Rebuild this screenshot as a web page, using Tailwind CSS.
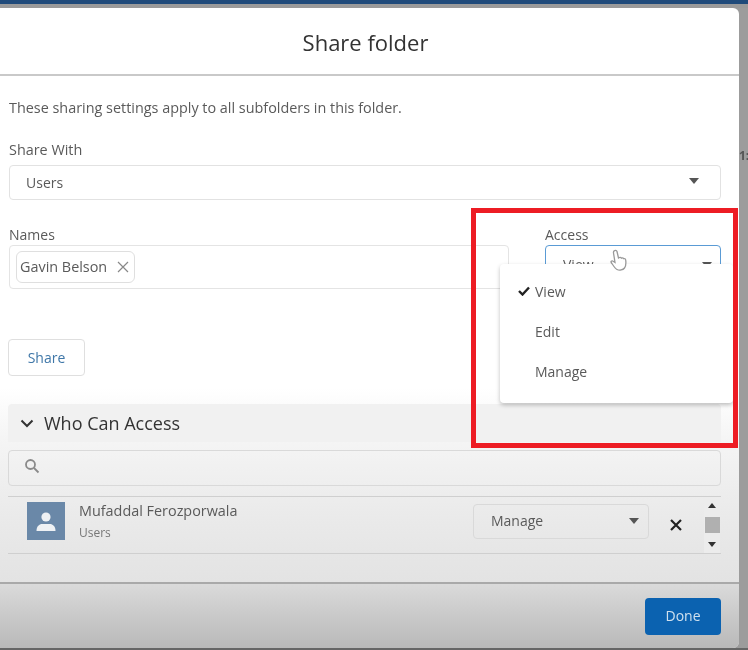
<!DOCTYPE html>
<html lang="en">
<head>
  <meta charset="UTF-8">
  <title>Share folder</title>
  <script src="https://cdn.jsdelivr.net/npm/@tailwindcss/browser@4"></script>
</head>
<body class="relative w-[748px] h-[650px] overflow-hidden bg-[#9c9c9c] font-['Open_Sans',sans-serif] text-[#5a5a5a]">
  <!-- page behind the modal -->
  <div class="h-1 bg-[#1f4a7a]"></div>
  <div class="h-1 bg-[#9a9a9a]"></div>
  <span class="absolute left-[739px] top-[146px] text-xs font-bold leading-5 text-[#555] blur-[0.4px]">1:</span>

  <!-- modal -->
  <div class="relative w-[739px] h-[640px] flex flex-col rounded-tr-md rounded-br-md blur-[0.4px] bg-[linear-gradient(to_bottom,#fff_0,#fff_380px,#f5f5f5_430px,#ebebeb_500px,#e3e3e3_574px)]">
    <div class="h-[68px] shrink-0 flex items-center justify-center pt-[2px] pr-2 border-b-2 border-[#c9c9c9] text-[22px] text-[#333]">Share folder</div>

    <div class="flex-1 px-[9px] flex flex-col">
      <p class="mt-[22px] text-[14.4px] leading-5">These sharing settings apply to all subfolders in this folder.</p>

      <label class="mt-[22px] text-[14.4px] leading-5">Share With</label>
      <div class="mt-[5px] w-[712px] h-[35px] flex items-center justify-between pl-[16px] pr-[21px] border border-[#e2e2e2] rounded text-sm">
        <span>Users</span>
        <span class="-mt-[3px] w-0 h-0 border-x-[5px] border-x-transparent border-t-[6px] border-t-[#555]"></span>
      </div>

      <div class="mt-[25px] flex">
        <div class="w-[500px]">
          <label class="block text-sm leading-5">Names</label>
          <div class="h-[44px] flex items-center pl-[6px] border border-[#e4e4e4] rounded">
            <div class="h-8 w-[119px] flex items-center justify-between pl-[3px] pr-1 border border-[#dfdfdf] rounded-md text-[14.4px]">
              <span>Gavin Belson</span>
              <svg width="14" height="14" viewBox="0 0 14 14" class="stroke-[#888]" fill="none" stroke-width="1.2"><path d="M2 2l10 10M12 2L2 12"/></svg>
            </div>
          </div>
        </div>
        <div class="ml-[36px] w-[176px]">
          <label class="block text-sm leading-5">Access</label>
          <div class="h-[40px] flex items-center justify-between pl-[17px] pr-2 border border-[#5a9bd5] rounded text-sm">
            <span>View</span>
            <span class="w-0 h-0 border-x-[5px] border-x-transparent border-t-[6px] border-t-[#555]"></span>
          </div>
        </div>
      </div>

      <button class="mt-[50px] w-[77px] h-[37px] -ml-px border border-[#dfdfdf] rounded text-sm text-[#3f77a8]">Share</button>

      <div class="mt-[28px] w-[713px] -ml-px h-[38px] shrink-0 flex items-center pl-3 gap-[10px] bg-[#f1f1f1] rounded-t text-[#333] text-[18px]">
        <svg width="14" height="14" viewBox="0 0 14 14" fill="none" stroke="#333" stroke-width="2"><path d="M1.5 4.500L7 10l5.500-5.500"/></svg>
        <span>Who Can Access</span>
      </div>

      <div class="mt-2 w-[713px] -ml-px h-[36px] shrink-0 flex items-center pl-[15px] pb-1 border border-[#d9d9d9] rounded">
        <svg width="16" height="16" viewBox="0 0 16 16" fill="none" stroke="#8a8a8a" stroke-width="1.8"><circle cx="6.5" cy="6.5" r="4.5"/><path d="M10 10l4.500 4.500"/></svg>
      </div>

      <div class="mt-[10px] w-[713px] -ml-px h-[58px] shrink-0 flex items-center pl-[19px] pb-[6px] border-y border-[#cfcfcf]">
        <div class="-mt-[2px] w-[38px] h-[38px] flex items-center justify-center bg-[#6a88a8]">
          <svg width="22" height="22" viewBox="0 0 22 22" fill="#eef1f4"><circle cx="11" cy="7" r="4.6"/><path d="M1.500 21c0-5 3-7 5.500-7h8c2.500 0 5.500 2 5.500 7z"/></svg>
        </div>
        <div class="ml-[14px] w-[394px]">
          <div class="text-[14.4px] leading-5 -mt-[2px]">Mufaddal Ferozporwala</div>
          <div class="text-xs leading-4 mt-1 text-[#777]">Users</div>
        </div>
        <div class="-mt-[2px] w-[176px] h-[35px] flex items-center justify-between pl-[17px] pr-[9px] border border-[#d9d9d9] rounded text-sm">
          <span>Manage</span>
          <span class="w-0 h-0 border-x-[5px] border-x-transparent border-t-[6px] border-t-[#555]"></span>
        </div>
        <svg width="14" height="14" viewBox="0 0 14 14" class="ml-5 mt-[6px]" fill="none" stroke="#222" stroke-width="2.200"><path d="M2 2l10 10M12 2L2 12"/></svg>
        <div class="ml-[21px] w-[16px] self-stretch -mb-[6px] flex flex-col items-center justify-between py-[6px] bg-[#ececec]">
          <span class="w-0 h-0 border-x-4 border-x-transparent border-b-[5px] border-b-[#333]"></span>
          <span class="w-[15px] h-4 bg-[#b0b0b0]"></span>
          <span class="w-0 h-0 border-x-4 border-x-transparent border-t-[5px] border-t-[#333]"></span>
        </div>
      </div>
    </div>

    <div class="h-[66px] shrink-0 flex items-center justify-end pr-[18px] border-t-2 border-[#a9a9a9] rounded-br-md bg-[linear-gradient(to_bottom,#dadada,#b9b9b9)]">
      <button class="w-[76px] h-[37px] rounded bg-[#0b62b0] text-sm text-[#cfe0ee]">Done</button>
    </div>
  </div>
  <div class="h-[2px] bg-[#666]"></div>

  <!-- open dropdown -->
  <ul class="absolute left-[500px] top-[264px] w-[233px] h-[139px] py-2 bg-white rounded-sm shadow-[0_2px_4px_rgba(0,0,0,0.25)] text-sm blur-[0.4px]">
    <li class="relative h-10 flex items-center pl-[35px]">
      <svg width="12" height="10" viewBox="0 0 12 10" class="absolute left-[18px] top-[14px]" fill="none" stroke="#222" stroke-width="2.400"><path d="M1 5l3.500 3.500L11 1.500"/></svg>
      View
    </li>
    <li class="h-10 flex items-center pl-[35px]">Edit</li>
    <li class="h-10 flex items-center pl-[35px]">Manage</li>
  </ul>

  <!-- red annotation over the video frame -->
  <div class="absolute left-[471px] top-[208px] w-[267px] h-[240px] border-[5px] border-[#ed1c24]"></div>

  <!-- mouse pointer -->
  <svg width="20" height="24" viewBox="0 0 20 24" class="absolute left-[609px] top-[249px] blur-[0.4px]" fill="#fff" stroke="#999" stroke-width="1.300"><path d="M5 2c1-1 2.500-1 3 .5L9.500 9l1-.5c1-.3 1.500 0 2 .7 1-.5 1.700-.2 2.200.5 1-.3 1.800.2 2 1.300.4 3 .3 6-1.200 8-1.500 2-5 2.800-7.500 1.500C6 19.500 4 16 2.200 13.500c-.6-1 .4-2 1.500-1.500L6 13.500 4.500 4c-.1-.8 0-1.500.5-2z"/></svg>
</body>
</html>
